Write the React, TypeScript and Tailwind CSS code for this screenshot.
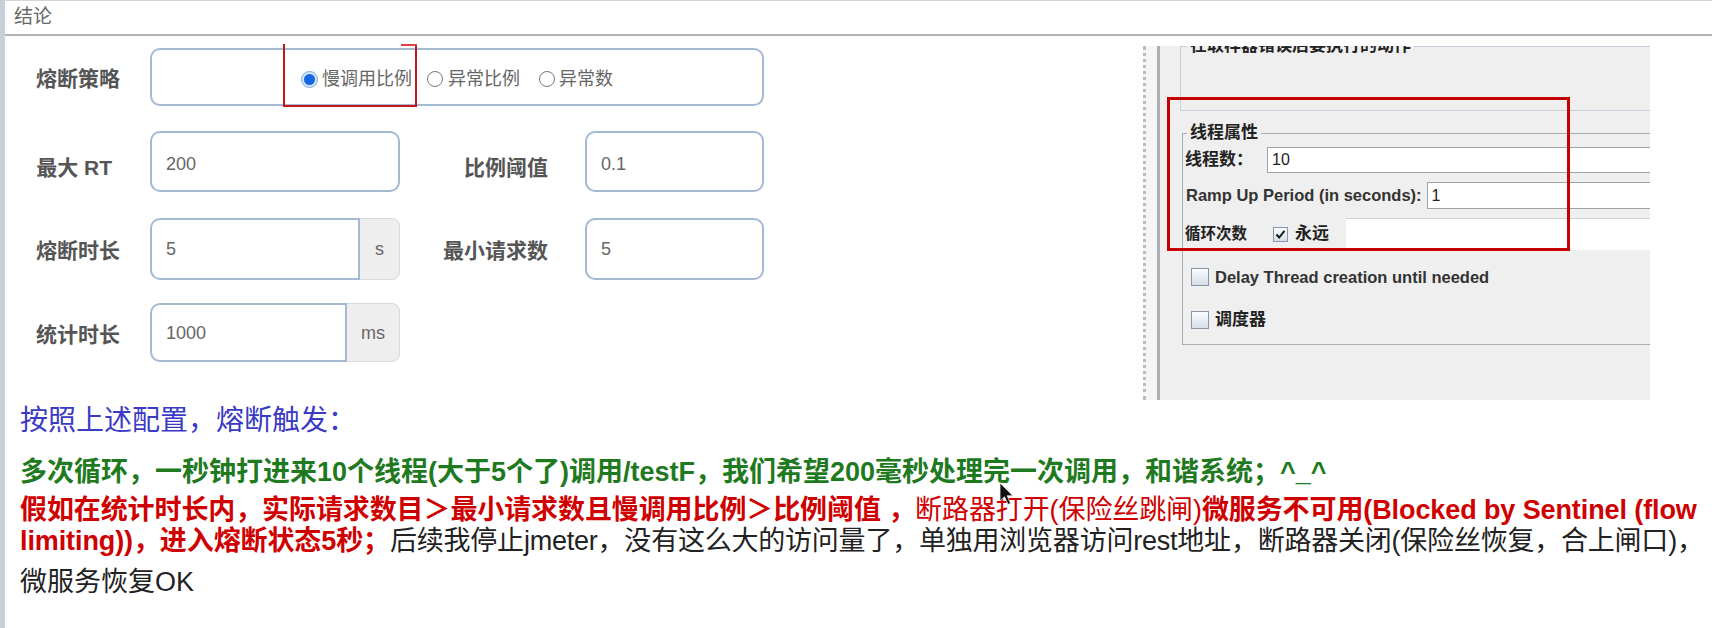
import React from "react";

const Label = ({ children, pr, pt = "pt-[3px]" }: { children: React.ReactNode; pr: string; pt?: string }) => (
  <div className={`flex items-center justify-end text-[21px] font-bold text-[#555] ${pr} ${pt}`}>
    {children}
  </div>
);

const Field = ({ value, pt = "pt-0" }: { value: string; pt?: string }) => (
  <div
    className={`flex h-full items-center rounded-[10px] border-2 border-[#a3bad2] bg-white pl-[14px] text-[18px] text-[#666] ${pt}`}
  >
    {value}
  </div>
);

const AddonField = ({ value, unit, unitW }: { value: string; unit: string; unitW: string }) => (
  <div className="flex h-full">
    <div className="flex flex-1 items-center rounded-l-[10px] border-2 border-[#a3bad2] bg-white pl-[14px] pt-[1px] text-[18px] text-[#666]">
      {value}
    </div>
    <div
      className={`flex items-center justify-center rounded-r-[8px] border border-l-0 border-[#dadada] bg-[#eeeeee] pt-[1px] text-[18px] text-[#666] ${unitW}`}
    >
      {unit}
    </div>
  </div>
);

const Radio = ({ checked }: { checked?: boolean }) =>
  checked ? (
    <span className="flex h-[17px] w-[17px] items-center justify-center rounded-full border border-[#7fa9e4] bg-[#d3e3fa]">
      <span className="h-[11px] w-[11px] rounded-full bg-[#1467e0]" />
    </span>
  ) : (
    <span className="block h-[16px] w-[16px] rounded-full border-[1.5px] border-[#777] bg-white" />
  );

const Form = () => (
  <div className="relative w-[1138px] pl-[13px] pt-[12px]">
    <div className="grid h-[58px] grid-cols-[132px_250px_185px_179px]">
      <Label pr="pr-[30px]" pt="pt-[4px]">熔断策略</Label>
      <div className="col-span-3 flex items-center rounded-[10px] border-2 border-[#a3bad2] pl-[149px] pt-[4px] text-[18px] text-[#666]">
        <Radio checked />
        <span className="ml-[4px]">慢调用比例</span>
        <span className="ml-[15px]">
          <Radio />
        </span>
        <span className="ml-[5px]">异常比例</span>
        <span className="ml-[19px]">
          <Radio />
        </span>
        <span className="ml-[4px]">异常数</span>
      </div>
    </div>

    <div className="mt-[25px] grid h-[61px] grid-cols-[132px_250px_185px_179px]">
      <Label pr="pr-[38px]" pt="pt-[13px]">最大 RT</Label>
      <Field value="200" pt="pt-[6px]" />
      <Label pr="pr-[37px]" pt="pt-[13px]">比例阈值</Label>
      <Field value="0.1" pt="pt-[6px]" />
    </div>

    <div className="mt-[26px] grid h-[62px] grid-cols-[132px_250px_185px_179px]">
      <Label pr="pr-[30px]" pt="pt-[4px]">熔断时长</Label>
      <AddonField value="5" unit="s" unitW="w-[40px]" />
      <Label pr="pr-[37px]" pt="pt-[4px]">最小请求数</Label>
      <Field value="5" pt="pt-[1px]" />
    </div>

    <div className="mt-[23px] grid h-[59px] grid-cols-[132px_250px_185px_179px]">
      <Label pr="pr-[30px]" pt="pt-[4px]">统计时长</Label>
      <AddonField value="1000" unit="ms" unitW="w-[53px]" />
    </div>

    {/* red annotation around the selected option */}
    <div className="absolute left-[278px] top-[8px] h-[63px] w-[134px] border-x-2 border-b-2 border-[#c2161c]">
      <div className="absolute right-[-2px] top-0 h-[2px] w-[16px] bg-[#d44]" />
    </div>
  </div>
);

const Check = ({ checked, size }: { checked?: boolean; size: string }) => (
  <span
    className={`flex items-center justify-center border border-[#8796a8] bg-gradient-to-b from-[#fbfdff] to-[#d5dee8] ${size}`}
  >
    {checked && (
      <svg width="11" height="11" viewBox="0 0 11 11">
        <path d="M1.5 5.5 L4.2 8.5 L9.5 1.8" fill="none" stroke="#1b1b1b" strokeWidth="2" />
      </svg>
    )}
  </span>
);

const Panel = () => (
  <div className="mt-[10px] flex h-[354px] w-[507px] bg-[#efefef]">
    <div className="w-[14px] border-l-[3px] border-dotted border-[#bcbcbc] bg-[#f6f6f6]" />
    <div className="w-[3px] bg-[#a9afb5]" />
    <div className="relative flex-1 overflow-hidden text-[#222]">
      <fieldset className="ml-[20px] mt-[-10px] h-[75px] w-[520px] border border-[#c6d1dc]">
        <legend className="ml-[6px] px-[3px] text-[17px] font-bold leading-[20px]">
          在取样器错误后要执行的动作
        </legend>
      </fieldset>

      <fieldset className="ml-[22px] mt-[12px] h-[222px] w-[520px] border border-[#a8aeb5]">
        <legend className="ml-[4px] px-[3px] text-[17px] font-bold leading-[20px]">线程属性</legend>

        <div className="mt-[4px] flex h-[26px] items-center pl-[2px]">
          <span className="w-[82px] text-[17px] font-bold">线程数：</span>
          <div className="flex h-full flex-1 items-center border border-[#9ea3a8] bg-white pl-[4px] text-[16px]">
            10
          </div>
        </div>

        <div className="mt-[9px] flex h-[27px] items-center pl-[3px]">
          <span className="text-[16.5px] font-bold text-[#333]">Ramp Up Period (in seconds):</span>
          <div className="ml-[5px] flex h-full flex-1 items-center border border-[#9ea3a8] bg-white pl-[4px] text-[16px]">
            1
          </div>
        </div>

        <div className="mt-[9px] flex h-[32px] items-center pl-[2px]">
          <span className="w-[88px] text-[15.5px] font-bold">循环次数</span>
          <Check checked size="h-[15px] w-[15px]" />
          <span className="ml-[7px] w-[51px] text-[17px] font-bold">永远</span>
          <div className="h-full flex-1 border-t border-[#c9d4df] bg-white" />
        </div>

        <div className="mt-[18px] flex items-center pl-[8px]">
          <Check size="h-[18px] w-[18px]" />
          <span className="ml-[6px] text-[16.5px] font-bold leading-[18px] text-[#333]">
            Delay Thread creation until needed
          </span>
        </div>

        <div className="mt-[25px] flex items-center pl-[8px]">
          <Check size="h-[18px] w-[18px]" />
          <span className="ml-[6px] text-[17px] font-bold leading-[18px]">调度器</span>
        </div>
      </fieldset>

      {/* red annotation around the thread properties */}
      <div className="absolute left-[7px] top-[51px] h-[154px] w-[403px] border-[3px] border-[#c40000]" />
    </div>
  </div>
);

export default function App() {
  return (
    <div className="relative h-[628px] w-[1712px] overflow-hidden border-l-[5px] border-t border-l-[#c7cfd9] border-t-[#d5d5d5] bg-white font-['Liberation_Sans','Noto_Sans_CJK_SC',sans-serif]">
      <div className="flex h-[35px] items-center border-b-2 border-[#b3b3b3] pl-[9px] text-[19px] text-[#666]">
        结论
      </div>

      <div className="flex h-[364px]">
        <Form />
        <Panel />
      </div>

      <div className="whitespace-nowrap pl-[15px] text-[27px] leading-[31px]">
        <p className="mt-[5px] text-[28px] text-[#3a3ac4]">按照上述配置，熔断触发：</p>
        <p className="mt-[21px] font-bold text-[#1f7a1f]">
          多次循环，一秒钟打进来10个线程(大于5个了)调用/testF，我们希望200毫秒处理完一次调用，和谐系统；^_^
        </p>
        <p className="mt-[7px] tracking-[-0.1px]">
          <span className="font-bold text-[#d00000]">
            假如在统计时长内，实际请求数目＞最小请求数且慢调用比例＞比例阈值&nbsp;，
          </span>
          <span className="text-[#d00000]">断路器打开(保险丝跳闸)</span>
          <span className="font-bold text-[#d00000]">微服务不可用(Blocked by Sentinel (flow</span>
          <br />
          <span className="font-bold text-[#d00000]">limiting))，进入熔断状态5秒；</span>
          <span className="tracking-[-0.22px] text-[#222]">
            后续我停止jmeter，没有这么大的访问量了，单独用浏览器访问rest地址，断路器关闭(保险丝恢复，合上闸口)，
          </span>
        </p>
        <p className="mt-[10px] text-[#222]">微服务恢复OK</p>
      </div>

      {/* mouse pointer */}
      <svg className="absolute left-[994px] top-[481px]" width="17" height="25" viewBox="0 0 17 25">
        <path d="M1 1 L1 19 L5.5 14.8 L9 22.5 L11.6 21.3 L8.2 13.8 L14 13.8 Z" fill="#111" stroke="#eee" strokeWidth="0.8" />
      </svg>
    </div>
  );
}
